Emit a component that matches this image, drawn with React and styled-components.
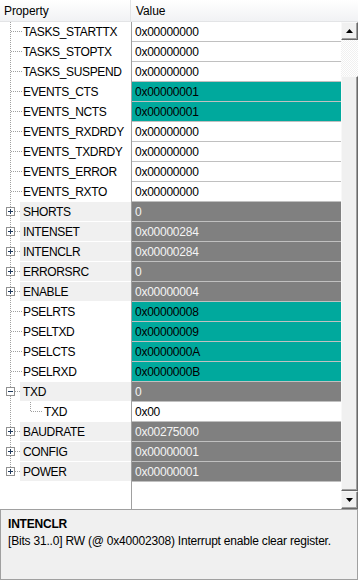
import React from "react";
import styled, { createGlobalStyle } from "styled-components";

const GlobalStyle = createGlobalStyle`
  html, body {
    margin: 0;
    padding: 0;
    background: #fff;
  }
  body {
    font-family: "Liberation Sans", Arial, sans-serif;
    font-size: 12px;
    color: #000;
  }
`;

const Window = styled.div`
  width: 358px;
  height: 580px;
  display: flex;
  flex-direction: column;
  overflow: hidden;
`;

const Header = styled.div`
  display: grid;
  grid-template-columns: 131px 1fr;
  height: 22px;
  flex: 0 0 22px;
  background: linear-gradient(#ffffff, #f1f2f4);
  border-bottom: 1px solid #e3e4e6;
  box-sizing: border-box;
`;

const HeaderCell = styled.div`
  display: flex;
  align-items: center;
  padding-left: ${(p) => p.$pad}px;
  border-right: ${(p) => (p.$divider ? "1px solid #e3e4e6" : "none")};
  letter-spacing: -0.1px;
`;

const Body = styled.div`
  flex: 1;
  display: flex;
  min-height: 0;
`;

const Grid = styled.div`
  flex: 1;
  display: flex;
  flex-direction: column;
  background: linear-gradient(90deg, #fff 131px, #a0a0a0 131px, #a0a0a0 132px, #fff 132px);
`;

const Row = styled.div`
  display: grid;
  grid-template-columns: 131px 1fr;
  height: 20px;
`;

const NameCell = styled.div`
  display: flex;
  align-items: stretch;
  height: 20px;
`;

const NameText = styled.div`
  flex: 1;
  display: flex;
  align-items: center;
  height: 19px;
  letter-spacing: -0.35px;
  background: ${(p) => (p.$group ? "#f0f0f0" : "#fff")};
  margin-left: ${(p) => (p.$group ? "-2px" : "0")};
  padding-left: ${(p) => (p.$group ? "3px" : "1px")};
`;

const valueBg = { plain: "#fff", teal: "#00a99d", gray: "#808080" };
const valueFg = { plain: "#000", teal: "#000", gray: "#f4f4f4" };

const ValueCell = styled.div`
  margin-left: 1px;
  height: 19px;
  display: flex;
  align-items: center;
  padding-left: 3px;
  letter-spacing: -0.25px;
  background: ${(p) => valueBg[p.$kind]};
  color: ${(p) => valueFg[p.$kind]};
  border-bottom: 1px solid #c0c0c0;
`;

const Scrollbar = styled.div`
  width: 17px;
  flex: 0 0 17px;
  display: flex;
  flex-direction: column;
  background: #f0f0f0;
`;

const ScrollButton = styled.div`
  height: 18px;
  flex: 0 0 18px;
  box-sizing: border-box;
  background: #f0f0f0;
  border-top: 1px solid #f8f8f8;
  border-left: 1px solid #f8f8f8;
  border-right: 1px solid #696969;
  border-bottom: 1px solid #696969;
  box-shadow: inset -1px -1px 0 #a0a0a0;
  display: flex;
  align-items: center;
  justify-content: center;
`;

const Track = styled.div`
  height: 36px;
  flex: 0 0 36px;
  background-color: #fff;
  background-image: linear-gradient(45deg, #f0f0f0 25%, transparent 25%, transparent 75%, #f0f0f0 75%),
    linear-gradient(45deg, #f0f0f0 25%, transparent 25%, transparent 75%, #f0f0f0 75%);
  background-size: 2px 2px;
  background-position: 0 0, 1px 1px;
`;

const Thumb = styled.div`
  flex: 1;
  box-sizing: border-box;
  background: #f0f0f0;
  border-top: 1px solid #f8f8f8;
  border-left: 1px solid #f8f8f8;
  border-right: 1px solid #696969;
  border-bottom: 1px solid #696969;
  box-shadow: inset -1px -1px 0 #a0a0a0;
`;

const Info = styled.div`
  flex: 0 0 71px;
  height: 71px;
  box-sizing: border-box;
  background: #f0f0f0;
  border: 1px solid #a0a0a0;
  padding: 6px 7px;
  line-height: 17px;
`;

const InfoTitle = styled.div`
  font-weight: bold;
  letter-spacing: -0.2px;
`;

const InfoText = styled.div`
  letter-spacing: -0.2px;
`;

const rows = [
  { name: "TASKS_STARTTX", value: "0x00000000", kind: "plain" },
  { name: "TASKS_STOPTX", value: "0x00000000", kind: "plain" },
  { name: "TASKS_SUSPEND", value: "0x00000000", kind: "plain" },
  { name: "EVENTS_CTS", value: "0x00000001", kind: "teal" },
  { name: "EVENTS_NCTS", value: "0x00000001", kind: "teal" },
  { name: "EVENTS_RXDRDY", value: "0x00000000", kind: "plain" },
  { name: "EVENTS_TXDRDY", value: "0x00000000", kind: "plain" },
  { name: "EVENTS_ERROR", value: "0x00000000", kind: "plain" },
  { name: "EVENTS_RXTO", value: "0x00000000", kind: "plain" },
  { name: "SHORTS", value: "0", kind: "gray", group: "plus" },
  { name: "INTENSET", value: "0x00000284", kind: "gray", group: "plus" },
  { name: "INTENCLR", value: "0x00000284", kind: "gray", group: "plus" },
  { name: "ERRORSRC", value: "0", kind: "gray", group: "plus" },
  { name: "ENABLE", value: "0x00000004", kind: "gray", group: "plus" },
  { name: "PSELRTS", value: "0x00000008", kind: "teal" },
  { name: "PSELTXD", value: "0x00000009", kind: "teal" },
  { name: "PSELCTS", value: "0x0000000A", kind: "teal" },
  { name: "PSELRXD", value: "0x0000000B", kind: "teal" },
  { name: "TXD", value: "0", kind: "gray", group: "minus" },
  { name: "TXD", value: "0x00", kind: "plain", depth: 1 },
  { name: "BAUDRATE", value: "0x00275000", kind: "gray", group: "plus" },
  { name: "CONFIG", value: "0x00000001", kind: "gray", group: "plus" },
  { name: "POWER", value: "0x00000001", kind: "gray", group: "plus", last: true },
];

const dot = { stroke: "#a0a0a0", strokeWidth: 1, strokeDasharray: "1 1" };

function TreeGutter({ group, depth, last, childBelow }) {
  const width = depth ? 43 : 22;
  return (
    <svg width={width} height="20" style={{ flex: `0 0 ${width}px` }}>
      <line x1="10.5" y1="0" x2="10.5" y2={last ? 10 : 20} {...dot} />
      {depth ? (
        <>
          <line x1="30.5" y1="0" x2="30.5" y2="10" {...dot} />
          <line x1="31" y1="9.5" x2="43" y2="9.5" {...dot} />
        </>
      ) : group ? (
        <>
          <line x1="15" y1="9.5" x2="22" y2="9.5" {...dot} />
          {childBelow && <line x1="30.5" y1="15" x2="30.5" y2="20" {...dot} />}
          <rect x="6.5" y="5.5" width="8" height="8" fill="#fff" stroke="#919191" />
          <line x1="8" y1="9.5" x2="13" y2="9.5" stroke="#1e395b" />
          {group === "plus" && <line x1="10.5" y1="7" x2="10.5" y2="12" stroke="#1e395b" />}
        </>
      ) : (
        <line x1="11" y1="9.5" x2="22" y2="9.5" {...dot} />
      )}
    </svg>
  );
}

function UpArrow({ down }) {
  return (
    <svg width="7" height="4" viewBox="0 0 7 4">
      <path d={down ? "M0 0h7L3.5 4z" : "M3.5 0L7 4H0z"} fill="#000" />
    </svg>
  );
}

export default function App() {
  return (
    <>
      <GlobalStyle />
      <Window>
        <Header>
          <HeaderCell $pad={4} $divider>Property</HeaderCell>
          <HeaderCell $pad={5}>Value</HeaderCell>
        </Header>
        <Body>
          <Grid>
            {rows.map((r, i) => (
              <Row key={i}>
                <NameCell>
                  <TreeGutter
                    group={r.group}
                    depth={r.depth}
                    last={r.last}
                    childBelow={r.group === "minus"}
                  />
                  <NameText $group={!!r.group}>{r.name}</NameText>
                </NameCell>
                <ValueCell $kind={r.kind}>{r.value}</ValueCell>
              </Row>
            ))}
          </Grid>
          <Scrollbar>
            <ScrollButton>
              <UpArrow />
            </ScrollButton>
            <Track />
            <Thumb />
            <ScrollButton>
              <UpArrow down />
            </ScrollButton>
          </Scrollbar>
        </Body>
        <Info>
          <InfoTitle>INTENCLR</InfoTitle>
          <InfoText>[Bits 31..0] RW (@ 0x40002308) Interrupt enable clear register.</InfoText>
        </Info>
      </Window>
    </>
  );
}
